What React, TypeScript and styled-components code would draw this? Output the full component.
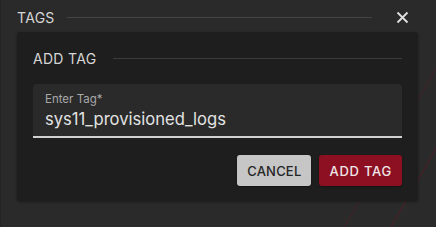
import React from "react";
import styled, { createGlobalStyle } from "styled-components";

const GlobalStyle = createGlobalStyle`
  html, body {
    margin: 0;
    padding: 0;
    background: #222;
  }
  body {
    font-family: "Inter", "Noto Sans", sans-serif;
  }
`;

const Dialog = styled.div`
  position: relative;
  width: 436px;
  height: 227px;
  box-sizing: border-box;
  background: #2a2a2a;
  border-left: 1px solid #242424;
  padding: 6px 17px 0 16px;
  overflow: hidden;
`;

const Streaks = styled.svg`
  position: absolute;
  inset: 0;
  pointer-events: none;
`;

const TitleRow = styled.div`
  display: flex;
  align-items: center;
  height: 22px;
  gap: 12px;
  margin-bottom: 4px;
`;

const Title = styled.span`
  color: #d6d6d6;
  font-size: 14px;
  font-weight: 400;
  letter-spacing: 0.3px;
  white-space: nowrap;
`;

const Rule = styled.div<{ $color?: string }>`
  flex: 1;
  height: 1px;
  background: ${(p) => p.$color ?? "#444"};
`;

const CloseButton = styled.button`
  width: 24px;
  height: 22px;
  margin: 0 5px 0 6px;
  padding: 0;
  border: none;
  background: transparent;
  color: #e0e0e0;
  display: flex;
  align-items: center;
  justify-content: center;
  cursor: pointer;
`;

const Card = styled.div`
  position: relative;
  width: 401px;
  box-sizing: border-box;
  background: #1e1e1e;
  border-radius: 3px;
  box-shadow: 0 1px 3px rgba(0, 0, 0, 0.35);
  padding: 11px 16px 15px 16px;
`;

const CardHead = styled.div`
  display: flex;
  align-items: center;
  gap: 17px;
  height: 30px;
  margin-bottom: 11px;
`;

const Field = styled.div`
  background: #2a2a2a;
  border-radius: 4px 4px 0 0;
  border-bottom: 2px solid #d0d0d0;
  height: 54px;
  box-sizing: border-box;
  padding: 8px 12px 0 12px;
`;

const Label = styled.div`
  color: #a8a8a8;
  font-size: 11.5px;
  line-height: 14px;
`;

const Value = styled.div`
  color: #e2e2e2;
  font-size: 16.6px;
  line-height: 24px;
  margin-top: 1px;
`;

const Actions = styled.div`
  display: flex;
  justify-content: flex-end;
  gap: 8px;
  margin-top: 17px;
`;

const Button = styled.button<{ $primary?: boolean }>`
  height: 31px;
  padding: 0 10px;
  border: none;
  border-radius: 3px;
  font-family: "Inter", "Noto Sans", sans-serif;
  font-size: 13px;
  font-weight: 500;
  letter-spacing: ${(p) => (p.$primary ? 0.75 : 0.2)}px;
  background: ${(p) => (p.$primary ? "#8c1022" : "#c6c6c6")};
  color: ${(p) => (p.$primary ? "#f0e6e8" : "#242424")};
  box-shadow: 0 1px 2px rgba(0, 0, 0, 0.4);
  cursor: pointer;
`;

export default function App() {
  return (
    <>
      <GlobalStyle />
      <Dialog>
        <Streaks width="436" height="227">
          <line x1="330" y1="250" x2="440" y2="60" stroke="#8c1022" strokeOpacity="0.35" strokeWidth="0.8" />
          <line x1="390" y1="227" x2="440" y2="140" stroke="#8c1022" strokeOpacity="0.5" strokeWidth="0.8" />
        </Streaks>
        <TitleRow>
          <Title>TAGS</Title>
          <Rule $color="#444" />
          <CloseButton aria-label="close">
            <svg width="13" height="13" viewBox="0 0 13 13">
              <path d="M1.5 1.5 L11.5 11.5 M11.5 1.5 L1.5 11.5" stroke="currentColor" strokeWidth="1.8" />
            </svg>
          </CloseButton>
        </TitleRow>
        <Card>
          <CardHead>
            <Title>ADD TAG</Title>
            <Rule $color="#3c3c3c" />
          </CardHead>
          <Field>
            <Label>Enter Tag*</Label>
            <Value>sys11_provisioned_logs</Value>
          </Field>
          <Actions>
            <Button>CANCEL</Button>
            <Button $primary>ADD TAG</Button>
          </Actions>
        </Card>
      </Dialog>
    </>
  );
}
